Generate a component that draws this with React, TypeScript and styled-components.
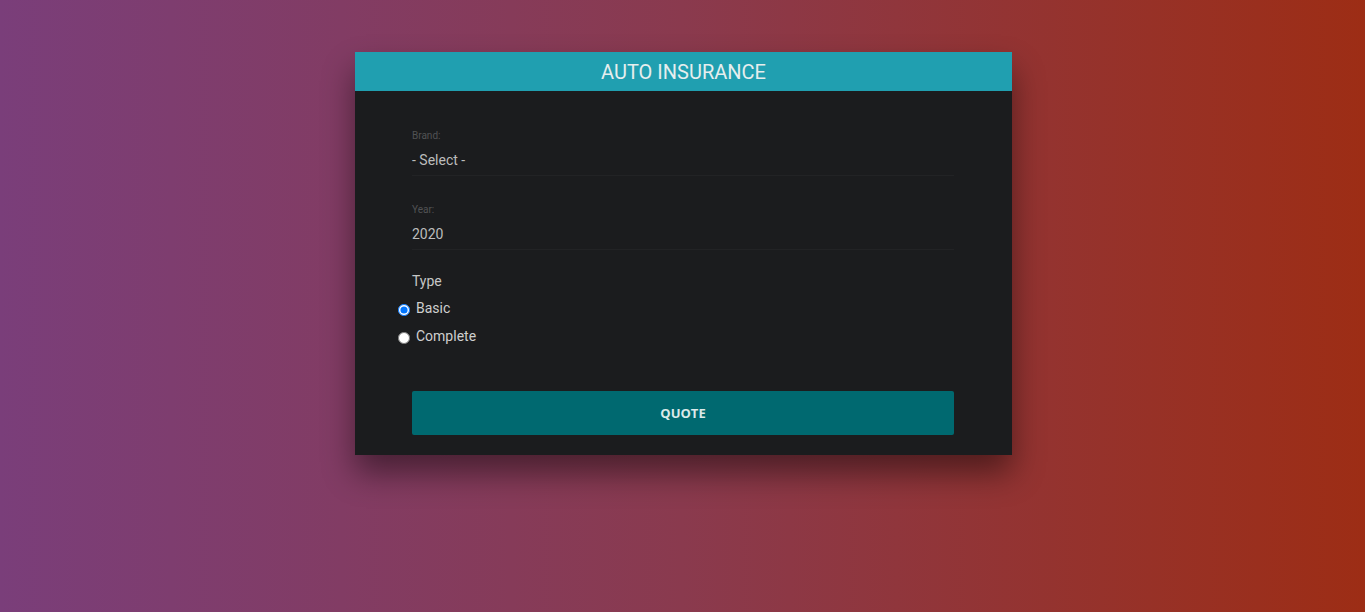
import React, { useState } from "react";
import styled, { createGlobalStyle } from "styled-components";

const Global = createGlobalStyle`
  html, body { margin: 0; padding: 0; }
  body {
    min-height: 612px;
    background: linear-gradient(to right, #7a3e7a 0%, #8a3a4e 50%, #9d2d15 100%);
    font-family: Roboto, "Liberation Sans", sans-serif;
  }
`;

const Page = styled.div`
  display: flex;
  justify-content: center;
  padding-top: 52px;
  min-height: 612px;
  box-sizing: border-box;
`;

const Card = styled.div`
  width: 657px;
  height: 403px;
  margin-left: 2px;
  background: #1b1c1e;
  box-shadow: 0 18px 30px rgba(0, 0, 0, 0.45);
  display: flex;
  flex-direction: column;
`;

const Header = styled.div`
  height: 39px;
  background: #209fb0;
  color: #e6eeee;
  font-size: 20px;
  display: flex;
  align-items: center;
  justify-content: center;
`;

const Body = styled.div`
  padding: 39px 58px 0 57px;
  display: flex;
  flex-direction: column;
`;

const Field = styled.div`
  display: flex;
  flex-direction: column;
  border-bottom: 1px solid #222325;
  padding-bottom: 7px;
  margin-bottom: 28px;
`;

const Label = styled.span`
  font-size: 10px;
  color: #515254;
  margin-bottom: 11px;
`;

const Value = styled.span`
  font-size: 14px;
  color: #bcbcbc;
`;

const TypeTitle = styled.div`
  font-size: 14px;
  color: #c6c6c6;
  margin-top: -5px;
  margin-bottom: 5px;
`;

const RadioRow = styled.label`
  display: flex;
  align-items: center;
  margin-left: -17px;
  height: 28px;
  font-size: 14px;
  color: #cfcfcf;
  cursor: pointer;
`;

const Radio = styled.input.attrs({ type: "radio" })`
  width: 12px;
  height: 12px;
  margin: 4px 6px 0 3px;
`;

const Button = styled.button`
  margin-top: 41px;
  height: 44px;
  width: 100%;
  border: none;
  border-radius: 2px;
  background: #006970;
  color: #dbe9ea;
  font-family: "Open Sans", sans-serif;
  font-weight: bold;
  font-size: 13px;
`;

export default function App() {
  const [type, setType] = useState("basic");
  return (
    <>
      <Global />
      <Page>
        <Card>
          <Header>AUTO INSURANCE</Header>
          <Body>
            <Field>
              <Label>Brand:</Label>
              <Value>- Select -</Value>
            </Field>
            <Field>
              <Label>Year:</Label>
              <Value>2020</Value>
            </Field>
            <TypeTitle>Type</TypeTitle>
            <RadioRow>
              <Radio name="type" checked={type === "basic"} onChange={() => setType("basic")} />
              Basic
            </RadioRow>
            <RadioRow>
              <Radio name="type" checked={type === "complete"} onChange={() => setType("complete")} />
              Complete
            </RadioRow>
            <Button>QUOTE</Button>
          </Body>
        </Card>
      </Page>
    </>
  );
}
